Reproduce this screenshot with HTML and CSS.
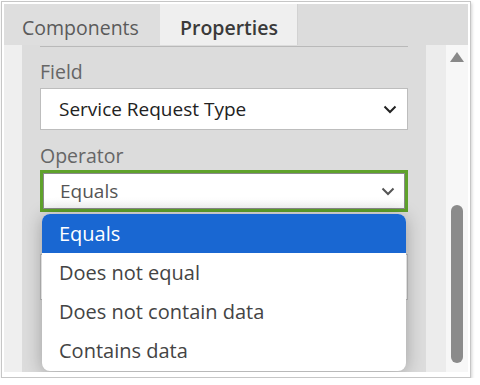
FILE: index.html
```html
<!DOCTYPE html>
<html lang="en">
<head>
    <meta charset="UTF-8">
    <title>Properties</title>
    <link rel="stylesheet" href="styles.css">
</head>
<body>
    <div class="frame">
        <div class="tabs">
            <div class="tab">Components</div>
            <div class="tab active">Properties</div>
        </div>
        <div class="main">
            <div class="gutter"></div>
            <div class="panel">
                <div class="prev"></div>

                <label class="label">Field</label>
                <div class="select">
                    <span>Service Request Type</span>
                    <svg class="chev" width="14" height="9" viewBox="0 0 14 9"><path d="M1.5 1.5 L7 7 L12.5 1.5" fill="none" stroke="#222" stroke-width="2"/></svg>
                </div>

                <label class="label second">Operator</label>
                <div class="select focused">
                    <span>Equals</span>
                    <svg class="chev" width="14" height="9" viewBox="0 0 14 9"><path d="M1.5 1.5 L7 7 L12.5 1.5" fill="none" stroke="#555" stroke-width="2"/></svg>
                </div>

                <!-- value box, mostly hidden under the open list -->
                <div class="select tall"></div>

                <ul class="dropdown">
                    <li class="selected">Equals</li>
                    <li>Does not equal</li>
                    <li>Does not contain data</li>
                    <li>Contains data</li>
                </ul>
            </div>
            <div class="strip"></div>
            <div class="scroll">
                <div class="arrow"></div>
                <div class="thumb"></div>
            </div>
        </div>
    </div>
</body>
</html>
```

FILE: styles.css
```css
body {
    margin: 0;
    background: #fff;
    font-family: "Open Sans", "Noto Sans", Arial, sans-serif;
}
.frame {
    margin: 1px 0 0 1px;
    width: 464px;
    height: 368px;
    padding: 2px 2px 5px 2px;
    border: 1px solid #c6c6c6;
    background: #fff;
    box-shadow: 1px 2px 3px rgba(0, 0, 0, 0.18);
    display: flex;
    flex-direction: column;
    overflow: hidden;
}
.tabs {
    height: 41px;
    background: #dcdcdc;
    display: flex;
}
.tab {
    width: 138px;
    padding: 7px 0 0 18px;
    font-size: 19.5px;
    line-height: 34px;
    color: #5a5a5a;
    background: #dedede;
}
.tab.active {
    width: 117px;
    padding-left: 20px;
    background: #efefef;
    color: #3a3a3a;
    font-weight: 600;
    border-right: 1px solid #d2d2d2;
}
.main {
    flex: 1;
    display: flex;
}
.gutter {
    width: 18px;
    background: #efefef;
}
.panel {
    position: relative;
    width: 386px;
    padding: 1px 0 0 18px;
    background: #dcdcdc;
    overflow: hidden;
}
.prev {
    width: 368px;
    border-top: 1px solid #b9b9b9;
}
.label {
    display: block;
    margin-top: 13px;
    font-size: 19.5px;
    line-height: 24px;
    color: #666;
}
.label.second {
    margin-top: 14px;
}
.select {
    box-sizing: border-box;
    width: 368px;
    height: 42px;
    margin-top: 4px;
    padding: 0 10px 0 18px;
    background: #fff;
    border: 1px solid #bdbdbd;
    display: flex;
    align-items: center;
    justify-content: space-between;
    font-size: 19px;
    color: #222;
}
.select.focused {
    margin-top: 2px;
    border: 3px solid #5fa22b;
    box-shadow: 0 0 0 1px #8a8a8a inset;
    padding-left: 17px;
    color: #555;
    background: linear-gradient(#fff 70%, #f4f4f4);
}
.select.tall {
    height: 46px;
    margin-top: 42px;
}
.chev {
    display: block;
}
.dropdown {
    position: absolute;
    left: 20px;
    top: 169px;
    width: 364px;
    margin: 0;
    padding: 0;
    list-style: none;
    background: #fff;
    border-radius: 8px;
    overflow: hidden;
    box-shadow: 0 2px 18px rgba(0, 0, 0, 0.28);
}
.dropdown li {
    height: 39px;
    line-height: 39px;
    padding-left: 17px;
    font-size: 20px;
    color: #444;
}
.dropdown li:last-child {
    height: 40px;
}
.dropdown li.selected {
    background: #1967d2;
    color: #fff;
}
.strip {
    width: 20px;
    background: #ececec;
}
.scroll {
    width: 22px;
    background: #f7f7f7;
    display: flex;
    flex-direction: column;
    align-items: center;
}
.arrow {
    margin-top: 7px;
    width: 0;
    height: 0;
    border-left: 7px solid transparent;
    border-right: 7px solid transparent;
    border-bottom: 10px solid #898989;
}
.thumb {
    margin-top: 143px;
    width: 12px;
    height: 158px;
    border-radius: 6px;
    background: #8b8b8b;
}
```
